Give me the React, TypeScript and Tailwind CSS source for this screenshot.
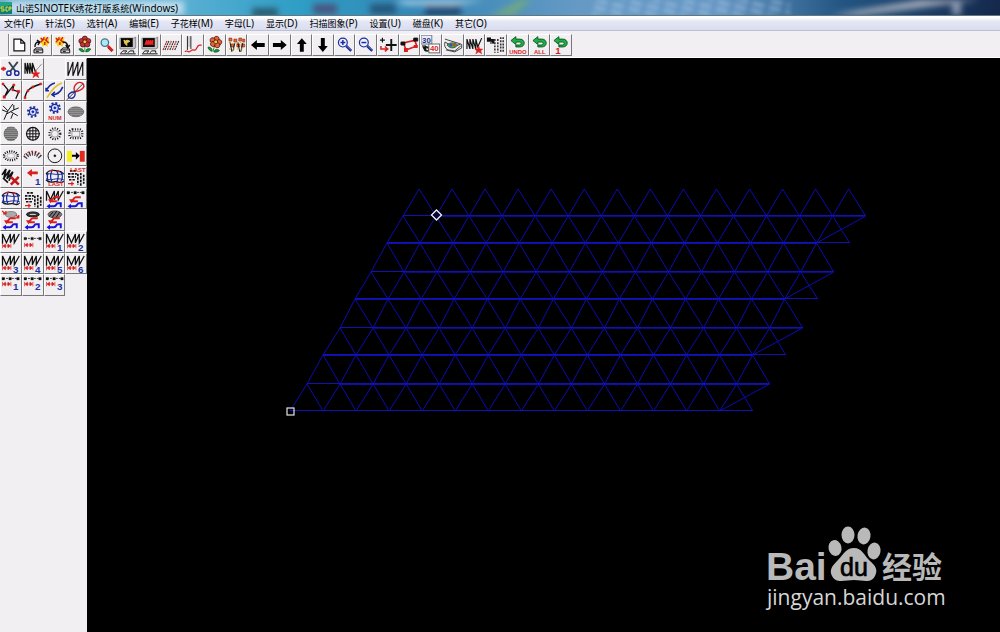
import type { ReactNode } from 'react';

type Tool = { name: string; icon: ReactNode };

const menus = [
    ['文件', 'F'],
    ['针法', 'S'],
    ['选针', 'A'],
    ['编辑', 'E'],
    ['子花样', 'M'],
    ['字母', 'L'],
    ['显示', 'D'],
    ['扫描图象', 'P'],
    ['设置', 'U'],
    ['磁盘', 'K'],
    ['其它', 'O'],
];

const RED = '#d81e1e';
const BLUE = '#1a2a9c';
const INK = '#111111';

/* Small pieces shared by several icons */
const Label = ({ x, y, size, color, children }: { x: number; y: number; size: number; color: string; children: string }) => (
    <text x={x} y={y} fontSize={size} fill={color} fontWeight="bold" textAnchor="middle" stroke="none">{children}</text>
);

const Burst = ({ x }: { x: number }) => (
    <g transform={`translate(${x} 2)`} stroke="none">
        <path d="M0 1l3 1 2-2 2 2 3-1-1 3 1 3-2 1v3l-3-2-2 2-1-3-2-1 1-2z" fill="#f4d21c" />
        <path d="M1 2l2 2-2 2M8 1L6 4l3 3M4 1v3M5 6v3" stroke={RED} strokeWidth="1.5" fill="none" />
    </g>
);

const Disk = ({ x }: { x: number }) => (
    <path d={`M${x} 16l2-2h6l1 2v3h-9zM${x} 16h9M${x + 2} 17.5h3`} fill="#ddd" stroke={INK} />
);

const Flower = ({ color }: { color: string }) => (
    <g stroke="#401010" strokeWidth=".7">
        <path d="M11 11v7M10 18c-3 0-5-2-5-3 2-1 5 0 5 3zM12 18c3 0 5-2 5-3-3-1-5 0-5 3z" fill="#169a36" stroke="#0a5a1c" />
        <circle cx="11" cy="4.5" r="2.6" fill={color} />
        <circle cx="7.5" cy="7" r="2.6" fill={color} />
        <circle cx="14.5" cy="7" r="2.6" fill={color} />
        <circle cx="9" cy="10.5" r="2.6" fill={color} />
        <circle cx="13.5" cy="10.5" r="2.6" fill={color} />
        <circle cx="11" cy="7.7" r="1.9" fill="#f5cf30" />
    </g>
);

const Monitor = ({ children }: { children: ReactNode }) => (
    <g>
        <path d="M3 4h14l2-1v11l-2 1H3z" fill="#c4c4c4" stroke="#777" strokeWidth=".8" />
        <rect x="4" y="4" width="12" height="9" fill="#050505" stroke="none" />
        {children}
        <path d="M4 19l2-2h4l-2 2M11 19l2-2h4v2M3 20h16" strokeWidth="1" />
    </g>
);

const Lens = ({ plus }: { plus?: boolean }) => (
    <g>
        <circle cx="9" cy="8.5" r="4.5" fill="#eef2ff" stroke={BLUE} strokeWidth="1.2" />
        <path d={plus ? 'M6.5 8.5h5M9 6v5' : 'M6.5 8.5h5'} stroke={BLUE} strokeWidth="1.5" />
        <path d="M12.5 12l5 5" stroke={BLUE} strokeWidth="2.6" />
        <path d="M13 12l4 4" stroke="#88a" strokeWidth=".7" />
    </g>
);

const Undo = ({ text, x = 11 }: { text: string; x?: number }) => (
    <g>
        <path d="M4 6.500l5-4v2.500h4c6 0 6 8 0 8H9v-2h3.500c2.500 0 2.500-3 0-3H9v2.500z" fill="#1fae46" stroke="#07541c" strokeWidth=".9" />
        <Label x={x} y={20} size={text === '1' ? 10 : 6} color={RED}>{text}</Label>
    </g>
);

const Star = ({ x, y }: { x: number; y: number }) => (
    <path d={`M${x} ${y - 4}l1 3h3l-2 2 1 3-3-2-3 2 1-3-2-2h3z`} fill={RED} stroke={RED} strokeWidth=".5" />
);

const Zigzag = () => <path d="M2.500 13V3l4 9 4-9v9l4-9v9l5-9" strokeWidth="1.300" />;

const Nodes = () => (
    <g>
        <path d="M3 4.500h16" strokeDasharray="2 1" strokeWidth=".8" />
        <path d="M2 3.500h2.500v2.500H2zM9 3.500h2.500v2.500H9zM17 3.500h2.500v2.500H17z" fill={INK} strokeWidth=".3" />
    </g>
);

const Spool = () => (
    <path d="M2.500 13v4.500M11 13v4.500M3 15.200l2.500-1.800v3.600zM10.500 15.200L8 13.400v3.600zM5 15.200h4" stroke={RED} fill={RED} strokeWidth=".7" />
);

const Swirl = () => (
    <g strokeWidth="2">
        <path d="M16 9.500h-5c-3 0-2 4-5 4" stroke={RED} />
        <path d="M7 13.500h6" stroke={RED} />
        <path d="M4 18.500h6c3 0 2-3 4-3h3v4" stroke="#1616d8" />
        <path d="M2.500 18.500l3.500-2.500v5z" fill="#1616d8" stroke="none" />
        <path d="M4 11.500h5l-2.500 4z" fill={RED} stroke="none" />
    </g>
);

const Numbered = ({ n, nodes }: { n: string; nodes?: boolean }) => (
    <g>
        {nodes ? <Nodes /> : <Zigzag />}
        <g transform={nodes ? 'translate(0 -5)' : undefined}><Spool /></g>
        <Label x={16} y={nodes ? 16 : 20} size={10} color="#1a2fa8">{n}</Label>
    </g>
);

const Gear = ({ y }: { y: number }) => (
    <g>
        <circle cx="11" cy={y} r="5" stroke={BLUE} strokeWidth="2" strokeDasharray="2 1.900" />
        <circle cx="11" cy={y} r="3.500" stroke={BLUE} strokeWidth="1.200" fill="#dde6ff" />
        <circle cx="11" cy={y} r="1" fill={BLUE} stroke={BLUE} />
    </g>
);

const Fringe = () => (
    <g>
        <ellipse cx="11" cy="11" rx="7" ry="4.500" strokeWidth="2.300" strokeDasharray="1 1.300" />
        <ellipse cx="11" cy="11" rx="4" ry="2.500" fill="#f4f3f4" stroke="#888" strokeWidth=".6" />
    </g>
);

const Coil = () => (
    <g>
        <path d="M2 8c4-6 9-3 12-3s4 1 6 3" strokeWidth="1.300" />
        <path d="M2 14c4 5 8 1 11 2s5 2 7-1" strokeWidth="1.300" />
        <path d="M2 9c5-3 8 1 18-1M2 13c6 3 9-2 18 1" stroke={BLUE} strokeWidth="1" />
        <path d="M4 7c-1 3-1 5 0 8M8 5c-2 4-2 7 0 11M13 5c2 4 2 7 0 11M17 6c2 3 2 7 0 10" stroke={BLUE} strokeWidth="1.300" />
        <path d="M6 5l3-1M13 5l3 1" stroke={RED} strokeWidth="1.300" />
    </g>
);

const Bricks = () => (
    <g>
        <path d="M5 5h7M3 8h9M3 11h8M4 14h6" strokeWidth="1.700" strokeDasharray="2.500 1" />
        <path d="M13 8v11M16 7v13M19 9v9" strokeWidth="1.700" strokeDasharray="2.500 1" />
        <path d="M3 18h6M7 16v4" stroke={RED} strokeWidth="1.300" />
    </g>
);

const toolbar: Tool[] = [
    { name: 'New', icon: <path d="M5 5h7l4 4v8H5zM12 5v4h4" fill="#fff" strokeWidth="1.200" /> },
    { name: 'Open design', icon: <g><Burst x={9} /><Disk x={3} /><path d="M4 13c0-3 1-5 4-5M6 6l3 2-2 3" strokeWidth="1.400" /></g> },
    { name: 'Save design', icon: <g><Burst x={3} /><Disk x={9} /><path d="M11 8c4 0 5 2 5 5M14 11l2 3 2-3" strokeWidth="1.400" /></g> },
    { name: 'Pattern', icon: <Flower color="#c3303a" /> },
    { name: 'Preview', icon: <g><circle cx="9" cy="8.500" r="3.800" fill="#aee8f4" stroke="#45768e" strokeWidth="1.300" /><path d="M12 12l5 5" stroke={RED} strokeWidth="2.800" /><path d="M12 14l4 4" stroke="#701010" strokeWidth=".8" /></g> },
    { name: 'Design display', icon: <Monitor><path d="M7 6l2 1 1-1 3 1-1 1-2 .5v3l-2-2z" fill="#e9c94a" stroke="#e9c94a" /></Monitor> },
    { name: 'Stitch display', icon: <Monitor><path d="M6 11l2-5v5l2-5v5l2-5v5l2-5v5" stroke="#ee2222" strokeWidth="1.300" /></Monitor> },
    { name: 'Fill', icon: <g strokeWidth="1.200" strokeDasharray="2 .7"><path d="M4 16l4-9M9 16l4-9M14 16l4-9" stroke="#333" /><path d="M6.500 16l4-9M11.500 16l4-9M2 16l4-9" stroke="#a03030" /></g> },
    { name: 'Needle', icon: <g><path d="M5.500 2v14M9 2v13" stroke="#222" /><path d="M7.200 2v11" stroke="#aaa" /><path d="M3 18c2-3 3 2 6-1s4 2 6-3 3-2 5-3" stroke={RED} strokeWidth="1.200" /></g> },
    { name: 'Sub pattern', icon: <g transform="rotate(16 11 11)"><Flower color="#e8643a" /></g> },
    {
        name: 'Pattern array',
        icon: (
            <g>
                <path d="M3 4h3v3H3zM8 5h3v3H8zM13 4h3v3h-3zM17 5h2v3h-2zM5 10h3v3H5zM11 10h3v3h-3zM16 10h3v3h-3z" fill="#e96a28" stroke="#852011" strokeWidth=".6" />
                <path d="M4 8l2 10M9 9l-2 8M12 8l2 10M17 9l-2 9" strokeWidth="1" />
                <path d="M3 15h16M3 8l5 2 5-2 5 2" stroke="#c5a420" strokeDasharray="2 2" />
            </g>
        ),
    },
    { name: 'Left', icon: <path d="M4 11l6-5v3h8v4h-8v3z" fill="#000" stroke="none" /> },
    { name: 'Right', icon: <path d="M18 11l-6-5v3H4v4h8v3z" fill="#000" stroke="none" /> },
    { name: 'Up', icon: <path d="M11 4l5 6h-3v8H9v-8H6z" fill="#000" stroke="none" /> },
    { name: 'Down', icon: <path d="M11 18l5-6h-3V4H9v8H6z" fill="#000" stroke="none" /> },
    { name: 'Zoom in', icon: <Lens plus /> },
    { name: 'Zoom out', icon: <Lens /> },
    { name: 'Move origin', icon: <g><path d="M3 6h5M5.500 3.500v5" strokeWidth="1.200" /><path d="M9 11h11M14.500 5v12" strokeWidth="1.900" /><path d="M4 12v3h6M8 12.500l3 2.500-3 2.500" stroke={RED} strokeWidth="1.500" /></g> },
    { name: 'Edit nodes', icon: <g><path d="M4 9l13-3M5 10l2 6 11-4-2-6" stroke={RED} strokeWidth="1.700" /><path d="M2 8h4v3H2zM15 4h4v3h-4z" fill={INK} /><path d="M15 11h4v3h-4zM5 14h4v4H5z" fill={RED} stroke="none" /></g> },
    {
        name: 'Change value',
        icon: (
            <g>
                <rect x="1" y="1" width="11" height="9" fill="#e9ecff" stroke="#778" />
                <Label x={6.5} y={8.5} size={8} color="#223a78">30</Label>
                <path d="M2 12h4v5h3v-2l-4-3M3 13h6v4H5z" fill={INK} />
                <rect x="9" y="10" width="11" height="9" fill="#fff" stroke="#666" />
                <Label x={14.5} y={17.5} size={8} color={RED}>40</Label>
            </g>
        ),
    },
    { name: 'Colours', icon: <g><path d="M3 5l16 5-7 3L3 8M4 16l9 2 7-4v-4M3 8c-1 4 0 6 3 8l7 1 6-5" stroke="#444" strokeWidth="1" fill="#eee" /><path d="M5 11c3-3 8-3 11 0-3 4-8 4-11 0z" fill="#3fb04a" stroke="#333" strokeWidth=".7" /><circle cx="9" cy="11" r="1.600" fill="#4444cc" stroke="none" /><circle cx="12.500" cy="11" r="1.400" fill="#dd3a30" stroke="none" /></g> },
    { name: 'Stitch effect', icon: <g><path d="M3 15V5l3 10V5l3 10V5l3 10V5l2 8 4-9" strokeWidth="1.200" /><Star x={15} y={16} /></g> },
    { name: 'Stitch list', icon: <g><path d="M2.500 4h3v3h-3zM4 5l5 4V5M9 9H5" fill={INK} strokeWidth="1.200" /><path d="M10 5v14M13 5v14M16 3v16M18.500 3v16" stroke="#333" strokeWidth="1.600" strokeDasharray="2 1.200" /></g> },
    { name: 'Undo', icon: <Undo text="UNDO" /> },
    { name: 'Undo all', icon: <Undo text="ALL" /> },
    { name: 'Undo one', icon: <Undo text="1" x={8} /> },
];

const palette: (Tool | null)[] = [
    { name: 'Cut', icon: <g><path d="M1 11h5M3.500 9v4" stroke={RED} strokeWidth="2" /><path d="M9 4l7 10M18 4l-8 10" stroke="#345" strokeWidth="1.900" /><circle cx="9" cy="15.500" r="2.200" stroke={BLUE} strokeWidth="1.500" /><circle cx="17" cy="15.500" r="2.200" stroke={BLUE} strokeWidth="1.500" /></g> },
    { name: 'Satin', icon: <g><path d="M3 16V5l2.500 11V5L8 16V5l2.500 11V5l3 9" strokeWidth="1.300" /><path d="M14 13l6-7" stroke="#777" strokeWidth=".8" /><Star x={14} y={16} /></g> },
    null,
    { name: 'Zigzag', icon: <path d="M3 4v14l5-14v14l5-14v14l5-14v14" strokeWidth="1.200" /> },
    { name: 'Polyline', icon: <g><path d="M3 4l5 6-4 8L14 5l-1 5 6 2-3 7" strokeWidth="1.300" /><path d="M2 3h2v2H2zM13 4h2v2h-2zM3 16h2.500v2.500H3zM17.500 10.500H20V13h-2.500zM12 9h2v2h-2z" fill={RED} stroke={RED} strokeWidth=".5" /></g> },
    { name: 'Curve', icon: <g><path d="M3 18C4 10 9 7 19 4" strokeWidth="1.500" /><path d="M2 17h2v2H2zM5 10h2v2H5zM10 6h2v2h-2zM18 3h2v2h-2z" fill={RED} stroke={RED} strokeWidth=".5" /></g> },
    { name: 'Parallel curves', icon: <g strokeWidth="1.600"><path d="M2 11C4 7 7 4 11 3M2 8v3h3" stroke={BLUE} /><path d="M3 18C7 13 8 7 18 3" stroke="#e6ba28" /><path d="M8 15c6 0 9-3 11-8M11 12l-3 3 3 2" stroke={BLUE} /></g> },
    { name: 'Loop', icon: <g strokeWidth="1.400"><path d="M10 12C7 6 13 1 17 3s3 7-7 9" stroke={RED} /><path d="M10 12c-5 0-8 3-6 6 4 2 7-1 6-6" stroke={BLUE} /><path d="M2 20L18 4" stroke="#334" strokeWidth="1" /></g> },
    { name: 'Branches', icon: <path d="M4 19L8 10 3 5M8 10l5-7M7 13l7-4 5-2M11 11l7 4M2 9l5 2M14 9V4M13 13l-2 5" strokeWidth="1" /> },
    { name: 'Gear', icon: <Gear y={11} /> },
    { name: 'Gear number', icon: <g><Gear y={7} /><Label x={11} y={19} size={6} color={RED}>NUM</Label></g> },
    { name: 'Ellipse fill', icon: <g><ellipse cx="11" cy="11" rx="8" ry="5" fill="#a5a5a5" stroke="#777" /><path d="M4 9h14M3 11h16M4 13h14M7 7h8M7 15h8" stroke="#555" strokeWidth=".8" /></g> },
    { name: 'Circle fill', icon: <g><circle cx="11" cy="11" r="7" fill="#aaa" stroke="#777" strokeWidth=".7" /><path d="M7 5h8M5 7h12M4 9h14M4 11h14M4 13h14M5 15h12M7 17h8" stroke="#555" strokeWidth="1" /></g> },
    { name: 'Grid fill', icon: <g><circle cx="11" cy="11" r="6.500" strokeWidth="1.200" /><path d="M8 5v12M11 4v14M14 5v12M5 8h12M4 11h14M5 14h12" strokeWidth="1" /></g> },
    { name: 'Sun ring', icon: <g><circle cx="11" cy="11" r="5.500" strokeWidth="2.300" strokeDasharray="1 1.500" /><circle cx="11" cy="11" r="3.500" stroke="#777" strokeWidth=".7" /></g> },
    { name: 'Square ring', icon: <g><rect x="4.500" y="6.500" width="13" height="9" rx="3" strokeWidth="2.300" strokeDasharray="1 1.500" /><rect x="7" y="8.500" width="8" height="5" stroke="#777" strokeWidth=".7" /></g> },
    { name: 'Oval ring', icon: <Fringe /> },
    { name: 'Arc stitch', icon: <g><path d="M3 13c4-6 12-6 16 0" strokeWidth="4.500" strokeDasharray="1.300 1.500" stroke="#333" /><path d="M2 10c5-5 13-5 18 0" stroke={RED} strokeDasharray="2 2" /><path d="M3 13c4-5 12-5 16 0" stroke="#6b4fb0" strokeDasharray="1 3" /></g> },
    { name: 'Circle', icon: <g><circle cx="11" cy="11" r="7" strokeWidth="1" /><circle cx="11" cy="11" r="1" fill={INK} strokeWidth=".6" /></g> },
    { name: 'Join', icon: <g stroke="none"><path d="M2 6h5v11H2z" fill="#f7ee19" /><path d="M15 6h5v11h-5z" fill="#e32a1c" /><path d="M7 10h4V7l4 4-4 4v-3H7z" fill="#000" /></g> },
    { name: 'Delete stitch', icon: <g><path d="M2 9l4-6-2 9 6-8-3 9 6-7-4 9M3 12l5 5" strokeWidth="1.700" /><path d="M11 11l8 8M19 11l-8 8" stroke="#c41818" strokeWidth="2.600" /></g> },
    { name: 'Back one', icon: <g><path d="M5 7l5-4v2.500h6v3h-6V11z" fill={RED} stroke="none" /><Label x={16} y={19} size={10} color="#1a2fa8">1</Label></g> },
    { name: 'Coil last', icon: <g><Coil /><Label x={12} y={20} size={6} color={RED}>LAST</Label></g> },
    { name: 'Blocks last', icon: <g><Bricks /><Label x={13} y={6} size={6} color={RED}>LAST</Label></g> },
    { name: 'Coil', icon: <Coil /> },
    { name: 'Blocks', icon: <Bricks /> },
    { name: 'Convert zigzag', icon: <g><Zigzag /><Swirl /></g> },
    { name: 'Convert nodes', icon: <g><Nodes /><Swirl /></g> },
    { name: 'Convert fill', icon: <g><ellipse cx="11" cy="5.500" rx="6" ry="3" fill="#aaa" stroke="#888" /><path d="M2 2l4 3M3 5h3V2M16 6l3 3M19 6v3h-3" stroke={RED} strokeWidth="1.300" /><Swirl /></g> },
    { name: 'Convert ellipse', icon: <g><ellipse cx="11" cy="5.500" rx="6.500" ry="2.500" fill="#333" /><ellipse cx="11" cy="5.500" rx="3.500" ry=".7" fill="#ccc" stroke="none" /><Swirl /></g> },
    { name: 'Convert shade', icon: <g><ellipse cx="11" cy="5.500" rx="7" ry="3.500" fill="#777" stroke="#555" /><path d="M5 8l4-5M8 9l5-7M12 9l4-6" strokeWidth="1" /><Swirl /></g> },
    null,
    { name: 'Zigzag width', icon: <g><Zigzag /><Spool /></g> },
    { name: 'Node width', icon: <g transform="translate(0 3)"><Nodes /><g transform="translate(0 -4)"><Spool /></g></g> },
    { name: 'Zigzag 1', icon: <Numbered n="1" /> },
    { name: 'Zigzag 2', icon: <Numbered n="2" /> },
    { name: 'Zigzag 3', icon: <Numbered n="3" /> },
    { name: 'Zigzag 4', icon: <Numbered n="4" /> },
    { name: 'Zigzag 5', icon: <Numbered n="5" /> },
    { name: 'Zigzag 6', icon: <Numbered n="6" /> },
    { name: 'Node 1', icon: <Numbered n="1" nodes /> },
    { name: 'Node 2', icon: <Numbered n="2" nodes /> },
    { name: 'Node 3', icon: <Numbered n="3" nodes /> },
    null,
];

const ToolButton = ({ name, icon }: Tool) => (
    <button
        aria-label={name}
        title={name}
        className="min-w-0 overflow-hidden border-t border-l border-t-white border-l-white border-r border-b border-r-[#77777b] border-b-[#77777b] bg-[#f1eff1] active:bg-[#dcdadc]"
    >
        <svg viewBox="1 1 20 20" className="block h-full w-full" fill="none" stroke={INK} fontFamily="Liberation Sans, sans-serif">
            {icon}
        </svg>
    </button>
);

/* Stitch mesh: left end and height of each row, top row holds only peaks */
const STEP = 33.05;
const meshRows = [
    [419, 189],
    [403, 216],
    [387, 243],
    [371, 272],
    [355, 299],
    [340, 328],
    [323, 355],
    [307, 384],
    [290, 411],
];

const buildMesh = () => {
    let d = '';
    for (let r = 0; r < meshRows.length - 1; r++) {
        const [x, y] = meshRows[r];
        const [nx, ny] = meshRows[r + 1];
        for (let k = 0; k < 14; k++) {
            d += `M${nx + k * STEP} ${ny}L${x + k * STEP} ${y}L${nx + (k + 1) * STEP} ${ny}`;
        }
        if (r % 2 === 1) d += `M${x + 14 * STEP} ${y}L${nx + 13 * STEP} ${ny}`;
    }
    return d;
};

const StitchMesh = () => (
    <svg viewBox="87 58 913 574" preserveAspectRatio="xMinYMin meet" className="block w-full" fill="none">
        <path d={buildMesh()} stroke="#0c0cb4" />
        {meshRows.slice(1).map(([x, y], i) => {
            const full = x + 14 * STEP;
            const bold = i % 2 === 1 && i < 7 ? full - STEP : full;
            return (
                <g key={y}>
                    <path d={`M${x} ${y - 0.5}H${full}`} stroke="#1212b0" />
                    {i < 7 && <path d={`M${x + (i % 2 ? 0 : STEP)} ${y + 0.5}H${bold}`} stroke={i % 2 || i === 6 ? '#0e0eae' : '#0a0a80'} />}
                </g>
            );
        })}
        <rect x="287" y="408" width="7" height="7" stroke="#e4e4e4" strokeWidth="1.200" />
        <path d="M436.500 210l5 5-5 5-5-5z" fill="#05053a" stroke="#f4f4f4" strokeWidth="1.300" />
    </svg>
);

const Watermark = () => (
    <svg viewBox="0 0 190 90" className="absolute right-12 bottom-4 w-[190px]" fill="#b9b9b9" role="img" aria-label="Baidu">
        <text x="4" y="54" fontSize="39" fontWeight="bold" fontFamily="Liberation Sans, sans-serif">Bai</text>
        <ellipse cx="73" cy="22" rx="6.500" ry="8" transform="rotate(-12 73 22)" />
        <ellipse cx="86" cy="9" rx="6.500" ry="8.500" />
        <ellipse cx="102" cy="10" rx="6.500" ry="8.500" transform="rotate(10 102 10)" />
        <ellipse cx="112" cy="25" rx="6.500" ry="8.500" transform="rotate(10 112 25)" />
        <path d="M92 22c8 0 10 7 15 12 7 6 9 10 6 16-4 8-12 4-21 4s-18 4-22-4c-3-6 0-10 6-16s8-12 16-12z" />
        <text x="92" y="50" fontSize="25" fill="#000" stroke="#000" strokeWidth=".7" textAnchor="middle" fontFamily="Liberation Sans, sans-serif">du</text>
        <text x="120" y="52" fontSize="30" fontWeight="bold" fontFamily="Noto Sans CJK SC, sans-serif">经验</text>
        <text x="5" y="79" fontSize="21" fill="#d6d6d6" fontFamily="Open Sans, sans-serif">jingyan.baidu.com</text>
    </svg>
);

/* Blurred desktop seen through the window frame */
const GlassBackdrop = () => (
    <svg viewBox="0 0 1000 15" preserveAspectRatio="none" className="absolute inset-0 h-full w-full" aria-hidden="true">
        <defs>
            <linearGradient id="glass">
                <stop offset="0" stopColor="#72afd0" />
                <stop offset=".16" stopColor="#62b3d5" />
                <stop offset=".3" stopColor="#2f9dc5" />
                <stop offset=".42" stopColor="#3486b5" />
                <stop offset=".58" stopColor="#669ac5" />
                <stop offset=".72" stopColor="#6595c2" />
                <stop offset=".84" stopColor="#245684" />
                <stop offset="1" stopColor="#14284b" />
            </linearGradient>
            <pattern id="ripple" width="17" height="7" patternUnits="userSpaceOnUse" patternTransform="rotate(14)">
                <path d="M0 3h12" stroke="#a8cbe8" strokeWidth="3" />
            </pattern>
            <filter id="soft" x="-20%" y="-80%" width="140%" height="260%">
                <feGaussianBlur stdDeviation="3" />
            </filter>
            <filter id="fine">
                <feGaussianBlur stdDeviation="2" />
            </filter>
        </defs>
        <rect width="1000" height="15" fill="url(#glass)" />
        <rect x="590" width="200" height="15" fill="url(#ripple)" opacity=".7" filter="url(#fine)" />
        <g filter="url(#soft)">
            <rect x="8" y="1" width="176" height="14" fill="#d6e9f4" opacity=".8" />
            <rect x="252" y="8" width="26" height="9" fill="#265c70" />
            <rect x="313" y="4" width="24" height="10" fill="#48547f" />
            <rect x="370" y="4" width="26" height="10" fill="#26577c" />
            <rect x="425" y="4" width="36" height="12" fill="#1f4d78" />
            <path d="M395 0h90l-30 5h-50z" fill="#a7cfe8" />
            <path d="M490 16l30-16h12l-20 16z" fill="#82b45e" opacity=".6" />
            <path d="M830 15l90-15h60l-70 9-50 6z" fill="#a5acb9" />
            <rect x="952" y="3" width="9" height="12" fill="#8695ae" />
        </g>
    </svg>
);

const App = () => {
    return (
        <div className="flex min-h-screen flex-col bg-[#f1eff1] font-['Noto_Sans','Noto_Sans_CJK_SC',sans-serif] text-black">
            {/* Title bar */}
            <header className="relative h-4 overflow-hidden border-b border-[#66767f]">
                <GlassBackdrop />
                <div className="relative flex h-full items-center gap-1">
                    <svg viewBox="0 0 12 12" className="h-3 w-3" aria-hidden="true">
                        <rect width="12" height="12" fill="#0e8070" />
                        <path d="M0 0h12v3L0 5z" fill="#22a482" />
                        <path d="M4 5H1v2h3v2H1M8 5H6v4h2M9 9V5h2v2H9" stroke="#e7dd3c" fill="none" />
                    </svg>
                    <h1 className="text-[9px] leading-none whitespace-nowrap">
                        山诺<span className="text-[10px]">SINOTEK</span>绣花打版系统<span className="text-[10px]">(Windows)</span>
                    </h1>
                </div>
            </header>

            {/* Menu bar */}
            <nav className="flex h-[15px] items-center gap-3 border-b border-[#bcc0d2] bg-linear-to-b from-white from-10% via-[#e4e7f4] via-40% to-[#d8ddf0] px-1">
                {menus.map(([label, key]) => (
                    <button key={key} className="text-[9px] leading-none whitespace-nowrap">
                        {label}<span className="text-[10px]">({key})</span>
                    </button>
                ))}
            </nav>

            {/* Toolbar */}
            <div className="h-[27px] border-b border-white pt-[3px] pl-2">
                <div className="grid h-[22px] w-[564px] grid-cols-26 border-l border-[#8a8a8e]">
                    {toolbar.map((tool) => (
                        <ToolButton key={tool.name} {...tool} />
                    ))}
                </div>
            </div>

            <main className="flex flex-1">
                {/* Stitch palette */}
                <aside className="w-[87px] shrink-0">
                    <div className="grid h-[238px] grid-cols-4 grid-rows-11">
                        {palette.map((tool, i) => (tool ? <ToolButton key={tool.name} {...tool} /> : <span key={i} />))}
                    </div>
                </aside>

                {/* Canvas */}
                <section className="relative min-w-0 flex-1 bg-black">
                    <StitchMesh />
                    <Watermark />
                </section>
            </main>
        </div>
    );
};

export default App;
